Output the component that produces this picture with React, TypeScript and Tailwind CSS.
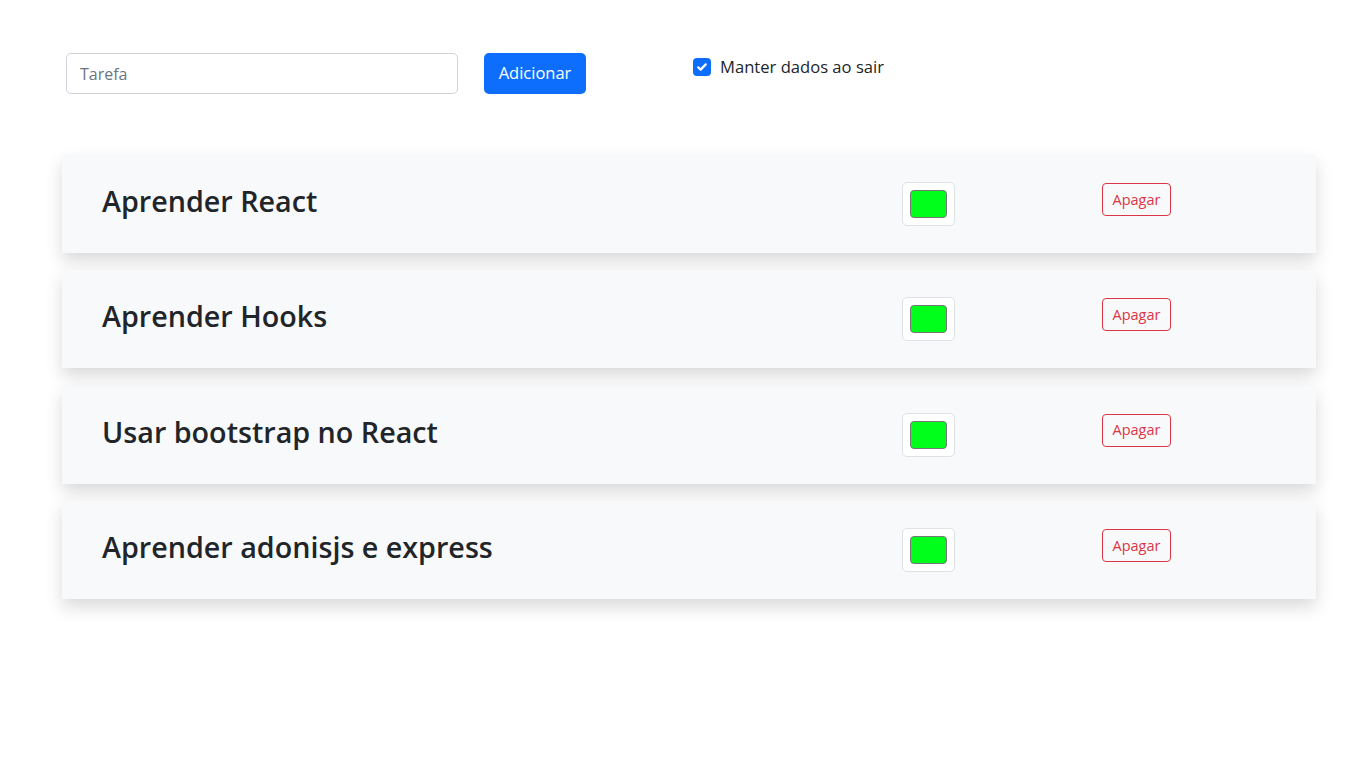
import React, { useState } from 'react';

interface Task {
  id: number;
  title: string;
  color: string;
}

const initialTasks: Task[] = [
  { id: 1, title: 'Aprender React', color: '#00ff1a' },
  { id: 2, title: 'Aprender Hooks', color: '#00ff1a' },
  { id: 3, title: 'Usar bootstrap no React', color: '#00ff1a' },
  { id: 4, title: 'Aprender adonisjs e express', color: '#00ff1a' },
];

export default function App() {
  const [tasks, setTasks] = useState<Task[]>(initialTasks);
  const [text, setText] = useState('');
  const [keep, setKeep] = useState(true);

  const addTask = () => {
    if (!text.trim()) return;
    setTasks([...tasks, { id: Date.now(), title: text, color: '#00ff1a' }]);
    setText('');
  };

  return (
    <div className="min-h-screen bg-white text-[#212529] font-['Open_Sans',sans-serif]">
      {/* Form */}
      <div className="flex items-start pt-[53px] pl-[66px]">
        <input
          value={text}
          onChange={(e) => setText(e.target.value)}
          placeholder="Tarefa"
          className="w-[392px] h-[41px] px-[13px] text-[16px] border border-[#ced4da] rounded-[5px] outline-none placeholder:text-[#6c757d]"
        />
        <button
          onClick={addTask}
          className="ml-[26px] w-[102px] h-[41px] bg-[#0d6efd] text-white text-[16.5px] rounded-[5px]"
        >
          Adicionar
        </button>
        <label className="ml-[107px] mt-[2px] flex items-center gap-[9px] text-[16.6px] cursor-pointer">
          <span
            onClick={() => setKeep(!keep)}
            className={`w-[18px] h-[18px] rounded-[4px] flex items-center justify-center ${
              keep ? 'bg-[#0d6efd]' : 'bg-white border border-[#ced4da]'
            }`}
          >
            {keep && (
              <svg width="12" height="12" viewBox="0 0 16 16" fill="none">
                <path d="M3 8.5l3.2 3L13 4.5" stroke="white" strokeWidth="3" strokeLinecap="round" strokeLinejoin="round" />
              </svg>
            )}
          </span>
          Manter dados ao sair
        </label>
      </div>

      {/* Tasks */}
      <div className="mt-[61px] ml-[62px] w-[1254px] flex flex-col gap-[17.4px]">
        {tasks.map((task) => (
          <div
            key={task.id}
            className="bg-[#f8f9fa] shadow-[0_8px_16px_rgba(0,0,0,0.15)] flex items-start py-[27px] pl-[40px]"
          >
            <h3 className="w-[800px] text-[28.7px] font-semibold leading-[38px]">{task.title}</h3>
            <div className="w-[200px]">
              <div className="w-[53px] h-[44px] bg-white border border-[#dee2e6] rounded-[5px] flex items-center justify-center">
                <div className="w-[37px] h-[28px] rounded-[4px] border border-[#767676]" style={{ backgroundColor: task.color }} />
              </div>
            </div>
            <button
              onClick={() => setTasks(tasks.filter((t) => t.id !== task.id))}
              className="mt-[1px] h-[33px] px-[9.5px] text-[14.5px] text-[#dc3545] border border-[#dc3545] rounded-[4px] bg-transparent"
            >
              Apagar
            </button>
          </div>
        ))}
      </div>
    </div>
  );
}
